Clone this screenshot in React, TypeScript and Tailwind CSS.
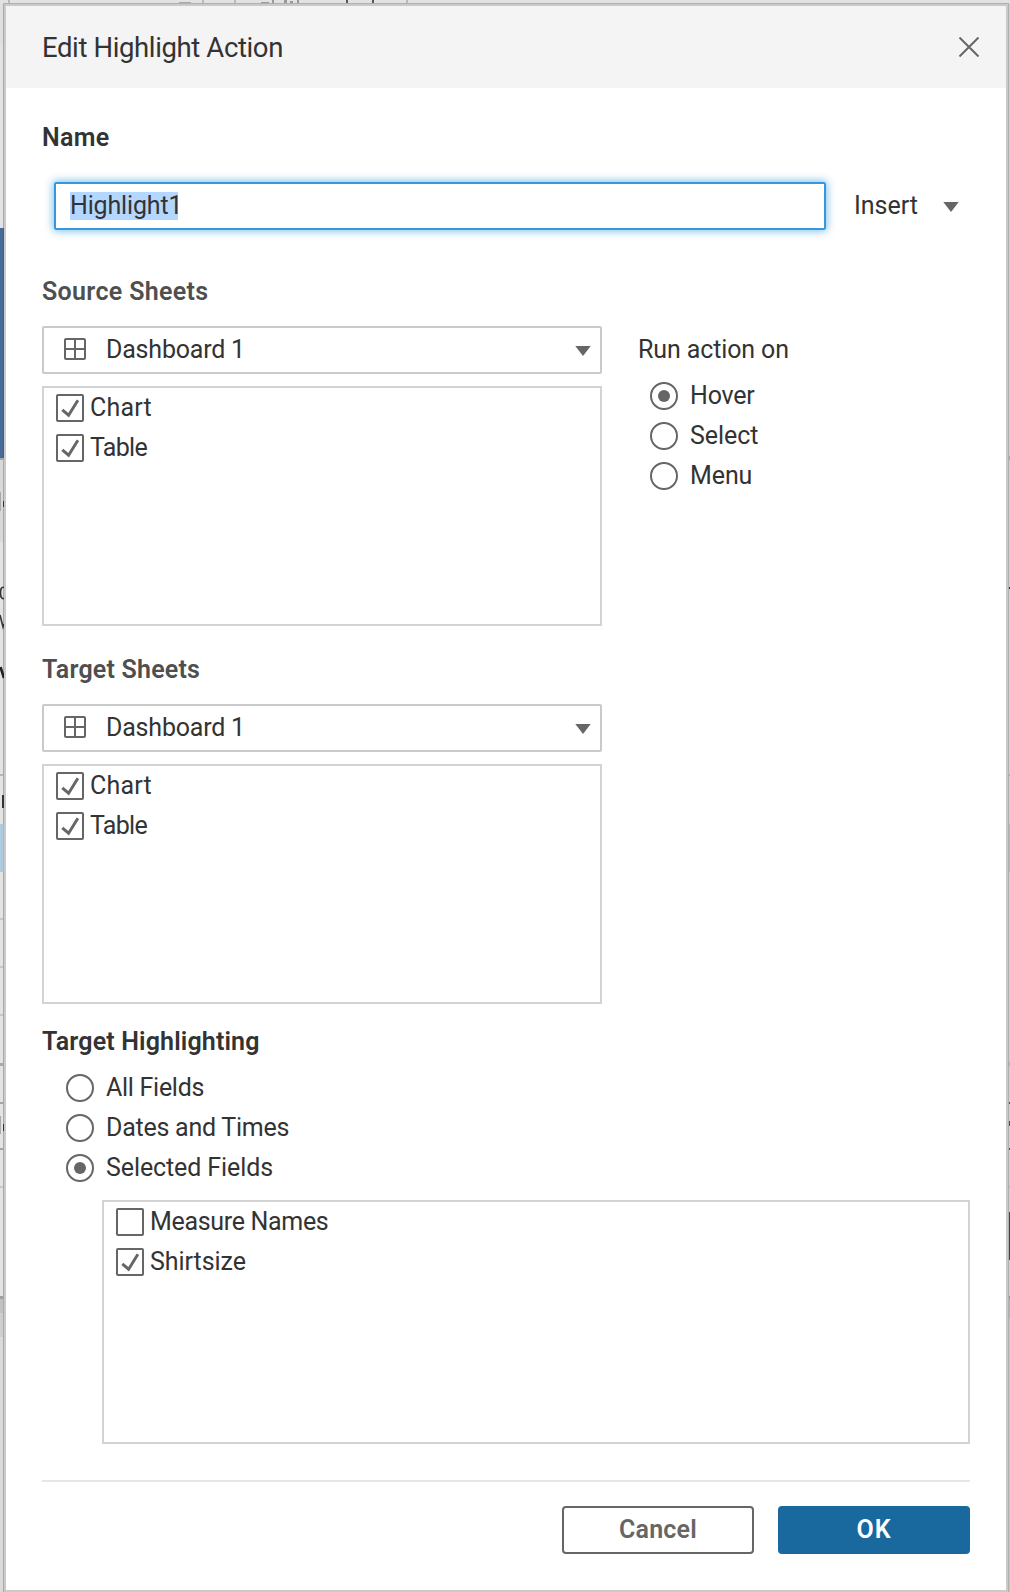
import React from 'react';
import clsx from 'clsx';

function Caret() {
  return (
    <svg width="16" height="10" viewBox="0 0 16 10" className="block shrink-0">
      <path d="M0.3 0H15.7L8 10Z" fill="#666" />
    </svg>
  );
}

function CheckRow({ label, checked, tracking }: { label: string; checked: boolean; tracking: string }) {
  return (
    <label className="flex h-10 items-center">
      <span className="flex size-7 shrink-0 items-center justify-center rounded-[2px] border-2 border-[#666] bg-white">
        {checked && (
          <svg width="24" height="24" viewBox="0 0 24 24" fill="none" stroke="#666" strokeWidth="2.9">
            <path d="M4.3 13.8L10.6 19.2L19.9 4.2" />
          </svg>
        )}
      </span>
      <span className={clsx('ml-1.5 whitespace-nowrap', tracking)}>{label}</span>
    </label>
  );
}

function RadioRow({ label, checked, tracking }: { label: string; checked?: boolean; tracking: string }) {
  return (
    <label className="flex h-10 items-center">
      <span className="flex size-7 shrink-0 items-center justify-center rounded-full border-2 border-[#666] bg-white">
        {checked && <span className="size-3 rounded-full bg-[#666]" />}
      </span>
      <span className={clsx('ml-3 whitespace-nowrap', tracking)}>{label}</span>
    </label>
  );
}

function SheetPicker() {
  return (
    <div className="w-[560px]">
      <div className="flex h-12 items-center rounded-[2px] border-2 border-[#cacaca] pr-[9px] pl-5">
        <svg width="22" height="22" viewBox="0 0 22 22" fill="none" stroke="#666" strokeWidth="2" className="-mt-0.5">
          <rect x="1" y="1" width="20" height="20" rx="1" />
          <path d="M11 1V21M1 11H21" />
        </svg>
        <span className="ml-5 flex-1 tracking-[-0.2px]">Dashboard 1</span>
        <div className="mt-0.5">
          <Caret />
        </div>
      </div>
      <div className="mt-3 h-60 border-2 border-[#d3d3d3] pl-3">
        <CheckRow label="Chart" checked tracking="tracking-[0.2px]" />
        <CheckRow label="Table" checked tracking="tracking-[-0.7px]" />
      </div>
    </div>
  );
}

type Segment = [height: number, color: string];

const leftStrip: Segment[] = [
  [45, '#dfdfdf'], [183, '#e3e3e3'], [230, '#456b96'], [2, '#a8a8a8'], [82, '#d9d9d9'], [232, '#e3e3e3'], [2, '#b5b5b5'],
  [48, '#e3e3e3'], [48, '#adcbdd'], [46, '#e3e3e3'], [2, '#c6c6c6'], [46, '#e3e3e3'], [2, '#c6c6c6'],
  [46, '#e3e3e3'], [2, '#c6c6c6'], [47, '#e3e3e3'], [3, '#a9a9a9'], [36, '#e3e3e3'], [2, '#a3a3a3'],
  [44, '#e3e3e3'], [2, '#a3a3a3'], [36, '#e3e3e3'], [2, '#c6c6c6'], [108, '#e3e3e3'], [3, '#a0a0a0'],
  [14, '#c2c2c2'], [24, '#cecece'], [255, '#dadada'],
];

const rightStrip: Segment[] = [
  [456, '#d0d0d0'], [4, '#a8a8a8'], [127, '#cfcfcf'], [2, '#333'], [185, '#d3d3d3'], [2, '#b0b0b0'], [48, '#cfcfcf'],
  [48, '#a3bccb'], [190, '#d0d0d0'], [4, '#b4b4b4'], [36, '#d0d0d0'], [2, '#555'], [17, '#d0d0d0'],
  [5, '#555'], [22, '#d0d0d0'], [2, '#555'], [36, '#d0d0d0'], [2, '#b8b8b8'], [24, '#d0d0d0'], [48, '#1b4f7b'],
  [36, '#d0d0d0'], [3, '#999'], [20, '#b4b4b4'], [273, '#c6c6c6'],
];

function Strip({ segments, className }: { segments: Segment[]; className: string }) {
  return (
    <div className={clsx('flex shrink-0 flex-col overflow-hidden', className)}>
      {segments.map(([height, color], i) => (
        <div key={i} className="shrink-0" style={{ height, backgroundColor: color }} />
      ))}
    </div>
  );
}

function ToolbarEdge() {
  return (
    <svg width="1010" height="4" className="absolute top-0 left-0">
      <rect width="1010" height="4" fill="#e2e2e2" />
      <g fill="#b9b9b9">
        <rect x="8" y="0" width="2" height="4" />
        <rect x="202" y="0" width="2" height="4" />
        <rect x="234" y="0" width="2" height="4" />
        <rect x="406" y="0" width="2" height="4" />
      </g>
      <rect x="179" y="2" width="12" height="2" fill="#a8a8a8" />
      <g fill="#999">
        <rect x="261" y="2" width="8" height="2" />
        <rect x="272" y="0" width="2" height="4" />
        <rect x="284" y="0" width="3" height="4" />
        <rect x="290" y="1" width="3" height="3" />
        <rect x="297" y="0" width="2" height="4" />
      </g>
      <g fill="#555">
        <rect x="346" y="0" width="2" height="4" />
        <rect x="372" y="0" width="2" height="4" />
      </g>
      <rect x="3" y="3" width="1006" height="1" fill="#b0b0b0" />
    </svg>
  );
}

function BackdropMarks() {
  return (
    <svg width="4" height="1592" className="absolute top-0 left-0" fill="none">
      <path d="M3.5 228V458" stroke="#3f618a" />
      <path d="M3.5 824V872" stroke="#9dbccf" />
      <path d="M0.5 492V511M0.5 1116V1134" stroke="#aaa" />
      <path d="M3.5 501V507M3.5 1124V1131" stroke="#333" />
      <path d="M4 587.5C1.5 586.5 0.5 589 0.5 593S1.5 599 4 598.5" stroke="#333" strokeWidth="1.6" />
      <path d="M0 615L3 627L4 624" stroke="#333" strokeWidth="1.6" />
      <path d="M0.5 667L4 678" stroke="#222" strokeWidth="2.6" />
      <path d="M3 795V808" stroke="#333" strokeWidth="2" />
    </svg>
  );
}

export default function App() {
  return (
    <div className="relative flex h-[1592px] w-[1010px] overflow-hidden bg-[#e3e3e3] font-[Roboto,'Liberation_Sans',sans-serif] text-[25px] leading-[30px] font-[380] text-[#333]">
      <Strip segments={leftStrip} className="w-[3px]" />
      <div className="w-px shrink-0 bg-[#a9a9a9]" />
      <main className="mt-1 flex h-[1588px] w-[1004px] shrink-0 flex-col border-2 border-[#cacaca] bg-white">
        <header className="flex h-[82px] shrink-0 items-center justify-between bg-[#f4f4f4] pr-[27px] pl-9">
          <h1 className="mt-0.5 text-[27.5px] tracking-[-0.38px]">Edit Highlight Action</h1>
          <svg width="20" height="20" viewBox="0 0 20 20" stroke="#666" strokeWidth="2">
            <path d="M0.5 0.5L19.5 19.5M19.5 0.5L0.5 19.5" />
          </svg>
        </header>

        <div className="flex flex-col px-9 pt-[35px]">
          <h2 className="font-semibold tracking-[0.3px]">Name</h2>
          <div className="mt-[29px] ml-3 flex h-12 items-center">
            <div className="flex h-12 w-[772px] items-center rounded-[2px] border-2 border-[#3498db] pl-3.5 shadow-[0_0_9px_1px_rgba(52,152,219,0.65)]">
              <span className="h-7 w-[108px] bg-[#b3d7ff] leading-7 tracking-[-0.15px]">Highlight1</span>
            </div>
            <span className="ml-7 w-[89px]">Insert</span>
            <div className="mt-0.5">
              <Caret />
            </div>
          </div>

          <div className="mt-[47px] flex">
            <section>
              <h2 className="font-semibold tracking-[0.33px] text-[#4f4f4f]">Source Sheets</h2>
              <div className="mt-[19px]">
                <SheetPicker />
              </div>
            </section>
            <section className="mt-[49px] ml-9 flex flex-col">
              <h3 className="h-[50px] leading-[47px] tracking-[-0.12px]">Run action on</h3>
              <div className="ml-3">
                <RadioRow label="Hover" checked tracking="tracking-[-0.2px]" />
                <RadioRow label="Select" tracking="tracking-[-0.05px]" />
                <RadioRow label="Menu" tracking="tracking-[-0.1px]" />
              </div>
            </section>
          </div>

          <section className="mt-[29px]">
            <h2 className="font-semibold tracking-[0.2px] text-[#4f4f4f]">Target Sheets</h2>
            <div className="mt-[19px]">
              <SheetPicker />
            </div>
          </section>

          <section className="mt-[23px]">
            <h2 className="font-semibold tracking-[0.15px]">Target Highlighting</h2>
            <div className="mt-[11px] ml-6">
              <RadioRow label="All Fields" tracking="tracking-[-0.28px]" />
              <RadioRow label="Dates and Times" tracking="tracking-[-0.25px]" />
              <RadioRow label="Selected Fields" checked tracking="tracking-[-0.1px]" />
            </div>
            <div className="mt-3 ml-[60px] h-[244px] border-2 border-[#d3d3d3] pl-3">
              <CheckRow label="Measure Names" checked={false} tracking="tracking-[-0.32px]" />
              <CheckRow label="Shirtsize" checked tracking="tracking-[-0.05px]" />
            </div>
          </section>

          <footer className="mt-9 flex justify-end gap-6 border-t-2 border-[#e6e6e6] pt-6">
            <button className="h-12 w-48 rounded-[4px] border-2 border-[#666] bg-white font-semibold tracking-[0.2px] text-[#666]">Cancel</button>
            <button className="h-12 w-48 rounded-[4px] bg-[#19699f] font-semibold tracking-[1px] text-white">OK</button>
          </footer>
        </div>
      </main>
      <div className="w-px shrink-0 bg-[#b0b0b0]" />
      <Strip segments={rightStrip} className="w-px" />
      <ToolbarEdge />
      <BackdropMarks />
    </div>
  );
}
